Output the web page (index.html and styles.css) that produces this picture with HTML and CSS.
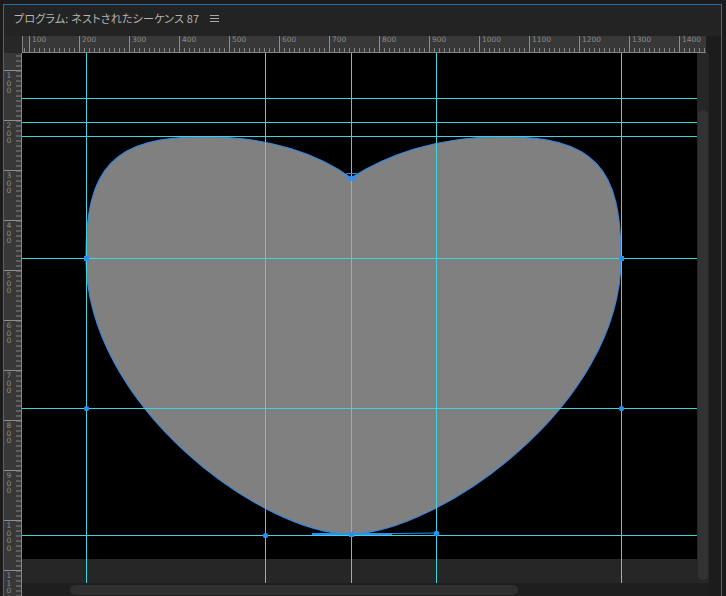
FILE: index.html
```html
<!DOCTYPE html>
<html lang="ja">
<head>
  <meta charset="UTF-8">
  <meta name="viewport" content="width=device-width, initial-scale=1.0">
  <title>プログラム</title>
  <link rel="stylesheet" href="styles.css">
</head>
<body>

<div class="panel">
  <div class="panel-header">
    <span class="panel-title">プログラム: ネストされたシーケンス 87</span>
    <svg class="menu-icon" width="9" height="14" viewBox="0 0 9 14">
      <path d="M0 4.5H9M0 7.5H9M0 10.5H9" stroke="#a8a8a8" stroke-width="1"/>
    </svg>
  </div>

  <div class="viewer">
    <div class="corner"></div>

    <!-- horizontal ruler -->
    <div class="ruler-h">
      <svg width="684" height="17" viewBox="0 0 684 17">
        <defs>
          <pattern id="tick-h" width="5" height="17" patternUnits="userSpaceOnUse" patternTransform="translate(2 0)">
            <line x1="0.5" y1="12" x2="0.5" y2="17" stroke="#858585"/>
          </pattern>
        </defs>
        <rect width="684" height="17" fill="#383838"/>
        <rect width="684" height="17" fill="url(#tick-h)"/>
        <path d="M0.5 0V17M0 16.5H684" stroke="#858585"/>
        <path d="M7.5 0V17M57.5 0V17M107.5 0V17M157.5 0V17M207.5 0V17M257.5 0V17M307.5 0V17M357.5 0V17M407.5 0V17M457.5 0V17M507.5 0V17M557.5 0V17M607.5 0V17M657.5 0V17" stroke="#8e8e8e"/>
        <g class="ruler-label">
          <text x="10" y="6">100</text>
          <text x="60" y="6">200</text>
          <text x="110" y="6">300</text>
          <text x="160" y="6">400</text>
          <text x="210" y="6">500</text>
          <text x="260" y="6">600</text>
          <text x="310" y="6">700</text>
          <text x="360" y="6">800</text>
          <text x="410" y="6">900</text>
          <text x="460" y="6">1000</text>
          <text x="510" y="6">1100</text>
          <text x="560" y="6">1200</text>
          <text x="610" y="6">1300</text>
          <text x="660" y="6">1400</text>
        </g>
      </svg>
    </div>

    <!-- vertical ruler -->
    <div class="ruler-v">
      <svg width="18" height="543" viewBox="0 0 18 543">
        <defs>
          <pattern id="tick-v" width="18" height="5" patternUnits="userSpaceOnUse" patternTransform="translate(0 2.5)">
            <line x1="12" y1="0.5" x2="18" y2="0.5" stroke="#858585"/>
          </pattern>
        </defs>
        <rect width="18" height="543" fill="#383838"/>
        <rect width="18" height="543" fill="url(#tick-v)"/>
        <path d="M17.5 0V543" stroke="#858585"/>
        <path d="M0 17.5H18M0 67.5H18M0 117.5H18M0 167.5H18M0 217.5H18M0 267.5H18M0 317.5H18M0 367.5H18M0 417.5H18M0 467.5H18M0 517.5H18" stroke="#8e8e8e"/>
        <g class="ruler-label">
          <text x="2.5" y="25">1<tspan x="2.5" dy="7.5">0</tspan><tspan x="2.5" dy="7.5">0</tspan></text>
          <text x="2.5" y="75">2<tspan x="2.5" dy="7.5">0</tspan><tspan x="2.5" dy="7.5">0</tspan></text>
          <text x="2.5" y="125">3<tspan x="2.5" dy="7.5">0</tspan><tspan x="2.5" dy="7.5">0</tspan></text>
          <text x="2.5" y="175">4<tspan x="2.5" dy="7.5">0</tspan><tspan x="2.5" dy="7.5">0</tspan></text>
          <text x="2.5" y="225">5<tspan x="2.5" dy="7.5">0</tspan><tspan x="2.5" dy="7.5">0</tspan></text>
          <text x="2.5" y="275">6<tspan x="2.5" dy="7.5">0</tspan><tspan x="2.5" dy="7.5">0</tspan></text>
          <text x="2.5" y="325">7<tspan x="2.5" dy="7.5">0</tspan><tspan x="2.5" dy="7.5">0</tspan></text>
          <text x="2.5" y="375">8<tspan x="2.5" dy="7.5">0</tspan><tspan x="2.5" dy="7.5">0</tspan></text>
          <text x="2.5" y="425">9<tspan x="2.5" dy="7.5">0</tspan><tspan x="2.5" dy="7.5">0</tspan></text>
          <text x="2.5" y="475">1<tspan x="2.5" dy="7.5">0</tspan><tspan x="2.5" dy="7.5">0</tspan><tspan x="2.5" dy="7.5">0</tspan></text>
          <text x="2.5" y="525">1<tspan x="2.5" dy="7.5">1</tspan><tspan x="2.5" dy="7.5">0</tspan><tspan x="2.5" dy="7.5">0</tspan></text>
        </g>
      </svg>
    </div>

    <!-- program monitor canvas -->
    <div class="stage">
      <div class="frame"></div>
      <div class="pasteboard"></div>
      <svg class="overlay" width="675" height="530" viewBox="0 0 675 530">
        <path class="heart" d="M329 125C298 102 248 84 188 84C88 82 64 117 64 205C64 355 243 482 329 481C414 480 599 355 599 205C599 117 575 82 475 84C415 84 365 102 329 125Z"/>
        <g class="guides">
          <path d="M64.5 0V530M243.5 0V530M329.5 0V530M414.5 0V530M599.5 0V530"/>
          <path d="M0 45.5H675M0 69.5H675M0 83.5H675M0 205.5H675M0 355.5H675M0 482.5H675"/>
        </g>
        <g class="handles">
          <line x1="290" y1="481" x2="370" y2="481" stroke-width="2"/>
          <line x1="370" y1="480.5" x2="414" y2="480" stroke-width="1"/>
          <circle cx="64.5" cy="355.5" r="2.6"/>
          <circle cx="599.5" cy="355.5" r="2.6"/>
          <circle cx="243.5" cy="482.5" r="2.6"/>
          <circle cx="414.5" cy="480.5" r="2.8"/>
          <rect x="62" y="203" width="5" height="5"/>
          <rect x="597" y="203" width="5" height="5"/>
          <rect x="327" y="479" width="5" height="5"/>
          <rect x="325.5" y="123" width="8" height="5" opacity="0.8"/>
          <path d="M324.5 124V120.5H334.5V124" fill="none" stroke-width="1"/>
        </g>
      </svg>
    </div>

    <div class="vscroll"><div class="thumb"></div></div>
    <div class="edge"></div>
    <div class="hscroll"><div class="thumb"></div></div>
  </div>
</div>

</body>
</html>
```

FILE: styles.css
```css
body {
  margin: 0;
  background: #1b1b1b;
  font-family: "Noto Sans CJK JP", "Noto Sans", sans-serif;
}

.panel {
  margin: 4px 0 0 3px;
  width: 717px;
  border: 1px solid #2d6db0;
  border-bottom: 0;
  background: #232323;
}

.panel-header {
  height: 31px;
  box-sizing: border-box;
  padding: 5px 0 0 10px;
  display: flex;
  align-items: flex-start;
  gap: 11px;
  color: #b4b4b4;
  font-size: 11px;
  line-height: 16px;
}

.panel-title {
  font-feature-settings: "palt";
  letter-spacing: 0.2px;
}

.menu-icon {
  display: block;
  margin-top: 1px;
}

.viewer {
  display: grid;
  grid-template-columns: 18px 675px 12px 12px;
  grid-template-rows: 17px 530px 13px;
  background: #1e1e1e;
}

.corner {
  background: #272727;
}

.ruler-h {
  grid-column: 2 / 4;
  width: 684px;
}

.ruler-v {
  grid-column: 1;
  grid-row: 2 / 4;
}

.ruler-h svg,
.ruler-v svg {
  display: block;
}

.ruler-label {
  font-family: "DejaVu Sans", sans-serif;
  font-size: 7.5px;
  fill: #8c8c8c;
}

.stage {
  grid-column: 2;
  grid-row: 2;
  position: relative;
}

.frame {
  height: 506px;
  background: #000;
}

.pasteboard {
  height: 24px;
  background: #262626;
}

.overlay {
  position: absolute;
  top: 0;
  left: 0;
}

.heart {
  fill: #808080;
  stroke: #3d86d6;
  stroke-width: 1.2;
}

.guides path {
  stroke: #3fd3de;
  stroke-width: 1;
  fill: none;
}

.handles {
  fill: #2a8ff0;
  stroke: #2a8ff0;
  stroke-width: 0;
}

.handles line,
.handles path {
  stroke: #2a8ff0;
}

.vscroll {
  grid-column: 3;
  grid-row: 2;
  background: #262626;
  padding-top: 57px;
}

.vscroll .thumb {
  width: 10px;
  height: 470px;
  margin-left: 1px;
  border-radius: 5px;
  background: #323232;
}

.edge {
  grid-column: 4;
  grid-row: 1 / 4;
  background: #1c1c1c;
}

.hscroll {
  grid-column: 2;
  grid-row: 3;
  padding: 2px 0 0 48px;
}

.hscroll .thumb {
  width: 448px;
  height: 10px;
  border-radius: 5px;
  background: #2f2f2f;
}
```
